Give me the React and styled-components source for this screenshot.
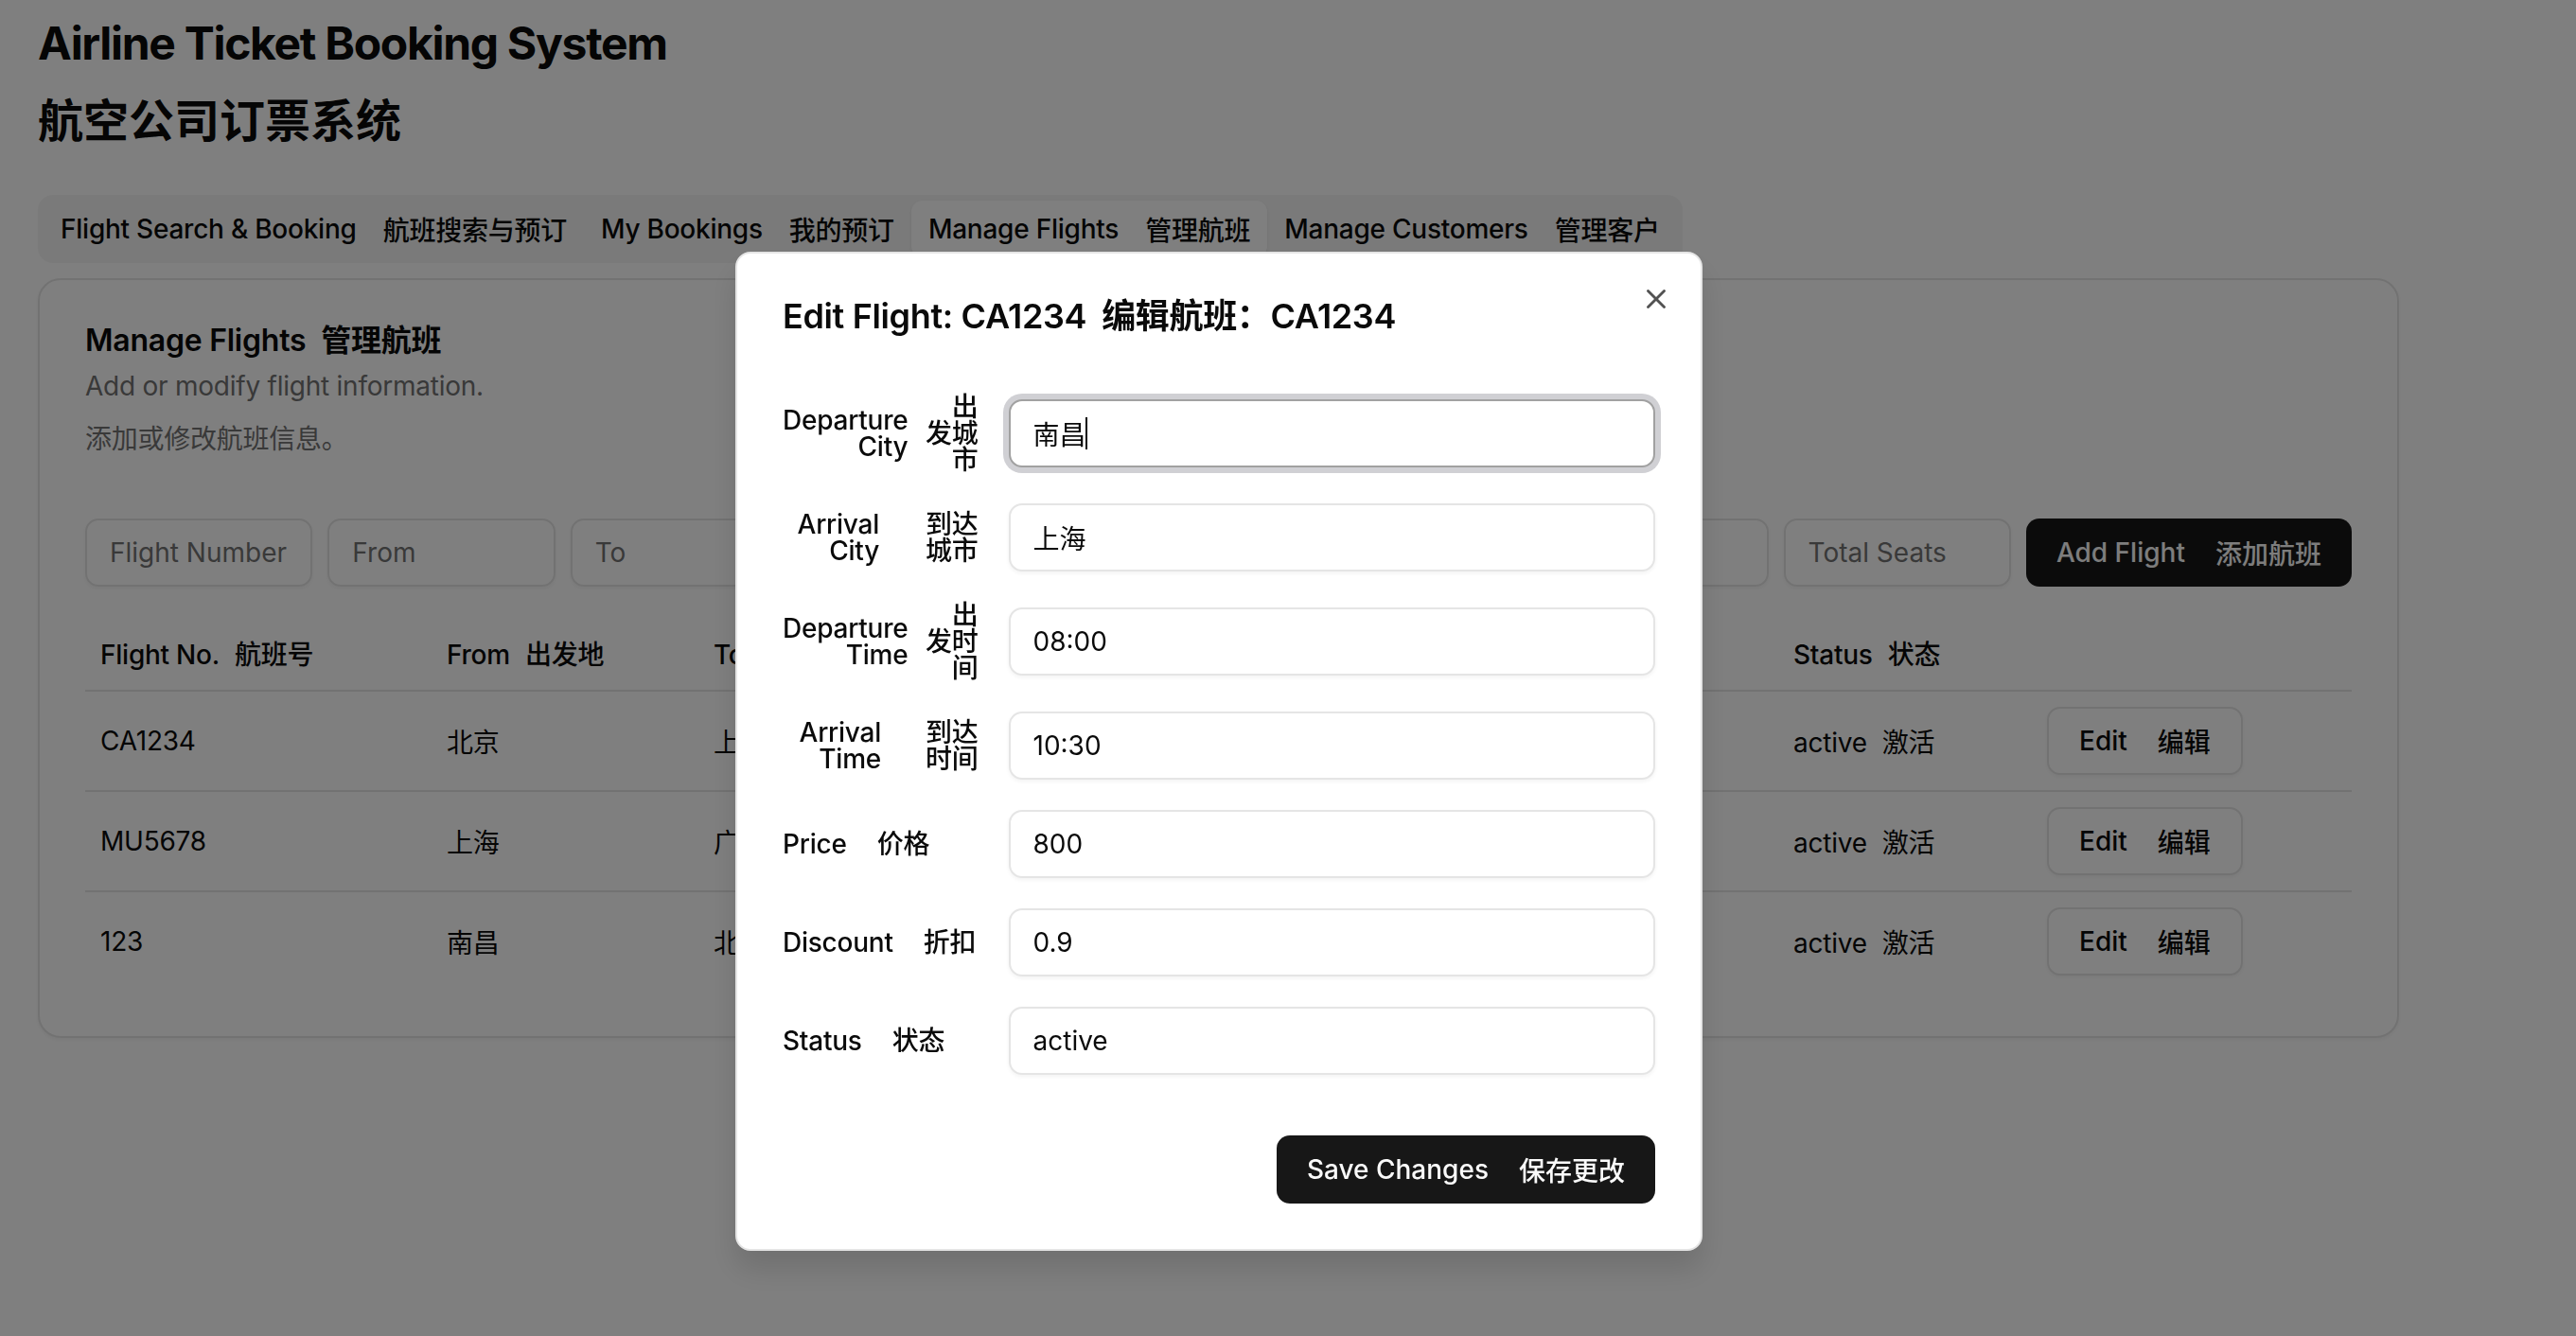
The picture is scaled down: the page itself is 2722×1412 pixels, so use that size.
import styled, { createGlobalStyle } from "styled-components";
import { X } from "lucide-react";

const GlobalStyle = createGlobalStyle`
  html, body {
    margin: 0;
    padding: 0;
    background: #ffffff;
  }
  body {
    font-family: Inter, "Noto Sans CJK SC", sans-serif;
    color: #0a0a0a;
    letter-spacing: -0.015em;
    overflow: hidden;
  }
  * {
    box-sizing: border-box;
  }
`;

const Page = styled.div`
  width: 2575px;
  padding: 14px 40px 0;
  min-height: 1412px;
`;

const Title = styled.h1`
  margin: 0;
  font-size: 48px;
  font-weight: 700;
  display: flex;
  flex-direction: column;
  gap: 18px;
`;

const TitleLine = styled.span`
  line-height: 64px;
  letter-spacing: ${(p) => (p.$tight ? "-1.3px" : "0")};
`;

const TabList = styled.div`
  margin-top: 46px;
  display: inline-flex;
  align-items: center;
  height: 72px;
  padding: 6px;
  background: #f5f5f5;
  border-radius: 16px;
`;

const Tab = styled.div`
  height: 60px;
  display: inline-flex;
  align-items: center;
  gap: 12px;
  padding: 0 16px;
  border: 2px solid transparent;
  border-radius: 12px;
  font-size: 28px;
  font-weight: 500;
  white-space: nowrap;
  background: ${(p) => (p.$active ? "#ffffff" : "transparent")};
  box-shadow: ${(p) => (p.$active ? "0 2px 4px rgba(0,0,0,0.08)" : "none")};
`;

const Zh = styled.span`
  margin-left: 16px;
`;

const Card = styled.div`
  margin-top: 16px;
  border: 2px solid #e5e5e5;
  border-radius: 24px;
  background: #ffffff;
  box-shadow: 0 2px 4px rgba(0, 0, 0, 0.05);
  padding: 48px;
`;

const CardTitle = styled.div`
  font-size: 32px;
  line-height: 32px;
  font-weight: 600;
`;

const CardDesc = styled.div`
  margin-top: ${(p) => p.$mt}px;
  font-size: 28px;
  line-height: 40px;
  color: #737373;
`;

const Toolbar = styled.div`
  margin-top: 64px;
  display: flex;
  gap: 16px;
`;

const Field = styled.input`
  flex: 1 1 0;
  min-width: 0;
  height: 72px;
  padding: 0 24px;
  border: 2px solid #e5e5e5;
  border-radius: 14px;
  background: transparent;
  font: inherit;
  font-size: 28px;
  color: #0a0a0a;
  box-shadow: 0 2px 4px rgba(0, 0, 0, 0.05);
  outline: none;
  &::placeholder {
    color: #737373;
  }
`;

const PrimaryButton = styled.button`
  flex: none;
  height: 72px;
  padding: 0 32px;
  display: inline-flex;
  align-items: center;
  gap: 16px;
  border: none;
  border-radius: 14px;
  background: #171717;
  color: #fafafa;
  font: inherit;
  font-size: 28px;
  font-weight: 500;
  white-space: nowrap;
`;

const Table = styled.table`
  margin-top: 30px;
  width: 100%;
  table-layout: fixed;
  border-collapse: collapse;
  font-size: 28px;
`;

const Col = styled.col`
  width: ${(p) => p.$w}px;
`;

const Th = styled.th`
  height: 80px;
  padding: 0 16px;
  text-align: left;
  font-weight: 500;
  white-space: nowrap;
  border-bottom: 2px solid #e5e5e5;
`;

const Tr = styled.tr`
  border-bottom: 2px solid #e5e5e5;
  &:last-child {
    border-bottom: none;
  }
`;

const Td = styled.td`
  padding: 16px;
  height: 104px;
  white-space: nowrap;
`;

const OutlineButton = styled.button`
  height: 72px;
  padding: 0 32px;
  display: inline-flex;
  align-items: center;
  gap: 16px;
  border: 2px solid #e5e5e5;
  border-radius: 14px;
  background: #ffffff;
  box-shadow: 0 2px 4px rgba(0, 0, 0, 0.05);
  font: inherit;
  font-size: 28px;
  font-weight: 500;
  color: #0a0a0a;
`;

const Overlay = styled.div`
  position: fixed;
  inset: 0;
  background: rgba(0, 0, 0, 0.5);
`;

const Dialog = styled.div`
  position: fixed;
  left: 777px;
  top: 266px;
  width: 1022px;
  display: grid;
  gap: 32px;
  padding: 48px;
  background: #ffffff;
  border: 2px solid #e5e5e5;
  border-radius: 16px;
  box-shadow: 0 20px 30px rgba(0, 0, 0, 0.12);
`;

const CloseButton = styled.button`
  position: absolute;
  top: 31px;
  right: 30px;
  width: 34px;
  height: 34px;
  padding: 0;
  border: none;
  background: none;
  color: #0a0a0a;
  opacity: 0.7;
  display: flex;
`;

const DialogTitle = styled.h2`
  margin: 0;
  font-size: 36px;
  line-height: 36px;
  font-weight: 600;
  letter-spacing: -0.01em;
`;

const Form = styled.div`
  display: grid;
  row-gap: 32px;
  padding: 32px 0;
`;

const Row = styled.div`
  display: grid;
  grid-template-columns: repeat(4, 1fr);
  column-gap: 32px;
  align-items: center;
`;

const FieldLabel = styled.label`
  display: flex;
  align-items: center;
  justify-content: ${(p) => (p.$wrap ? "space-between" : "flex-start")};
  gap: 16px;
  font-size: 28px;
  line-height: 28px;
  font-weight: 500;
  text-align: right;
  white-space: nowrap;
`;

const LabelEn = styled.span`
  min-width: ${(p) => p.$minW || 0}px;
`;

const LabelZh = styled.span`
  margin-left: ${(p) => (p.$wrap ? 0 : 16)}px;
`;

const InputWrap = styled.div`
  grid-column: span 3;
  position: relative;
  display: flex;
`;

const DialogInput = styled.input`
  width: 100%;
  height: 72px;
  padding: 0 24px;
  border: 2px solid ${(p) => (p.$focused ? "#a1a1a1" : "#e5e5e5")};
  border-radius: 14px;
  background: #ffffff;
  font: inherit;
  font-size: 28px;
  color: #0a0a0a;
  caret-color: transparent;
  outline: none;
  box-shadow: ${(p) =>
    p.$focused
      ? "0 0 0 6px rgba(161, 161, 170, 0.5)"
      : "0 2px 4px rgba(0, 0, 0, 0.05)"};
`;

const Caret = styled.span`
  position: absolute;
  left: 81px;
  top: 19px;
  width: 2px;
  height: 34px;
  background: #0a0a0a;
`;

const Footer = styled.div`
  display: flex;
  justify-content: flex-end;
`;

const tabs = [
  ["Flight Search & Booking", "航班搜索与预订"],
  ["My Bookings", "我的预订"],
  ["Manage Flights", "管理航班"],
  ["Manage Customers", "管理客户"],
];

const placeholders = [
  "Flight Number",
  "From",
  "To",
  "Departure Time",
  "Arrival Time",
  "Discount",
  "Price",
  "Total Seats",
];

const flights = [
  { no: "CA1234", from: "北京", to: "上海", dep: "08:00", arr: "10:30", price: "800" },
  { no: "MU5678", from: "上海", to: "广州", dep: "09:00", arr: "11:30", price: "1000" },
  { no: "123", from: "南昌", to: "北京", dep: "12:00", arr: "14:00", price: "900" },
];

const fields = [
  { en: ["Departure", "City"], zh: ["出", "发城", "市"], value: "南昌", focused: true },
  { en: ["Arrival", "City"], zh: ["到达", "城市"], value: "上海", minW: 102 },
  { en: ["Departure", "Time"], zh: ["出", "发时", "间"], value: "08:00" },
  { en: ["Arrival", "Time"], zh: ["到达", "时间"], value: "10:30", minW: 104 },
  { en: ["Price"], zh: ["价格"], value: "800" },
  { en: ["Discount"], zh: ["折扣"], value: "0.9" },
  { en: ["Status"], zh: ["状态"], value: "active" },
];

const Lines = ({ lines }) =>
  lines.map((l, i) => (
    <span key={i}>
      {l}
      {i < lines.length - 1 && <br />}
    </span>
  ));

export default function App() {
  return (
    <>
      <GlobalStyle />
      <Page>
        <Title>
          <TitleLine $tight>Airline Ticket Booking System</TitleLine>
          <TitleLine>航空公司订票系统</TitleLine>
        </Title>

        <TabList>
          {tabs.map(([en, zh]) => (
            <Tab key={en} $active={en === "Manage Flights"}>
              {en}
              <span>
                <Zh>{zh}</Zh>
              </span>
            </Tab>
          ))}
        </TabList>

        <Card>
          <CardTitle>
            Manage Flights<Zh>管理航班</Zh>
          </CardTitle>
          <CardDesc $mt={12}>Add or modify flight information.</CardDesc>
          <CardDesc $mt={16}>添加或修改航班信息。</CardDesc>

          <Toolbar>
            {placeholders.map((p) => (
              <Field key={p} placeholder={p} />
            ))}
            <PrimaryButton>
              Add Flight
              <Zh>添加航班</Zh>
            </PrimaryButton>
          </Toolbar>

          <Table>
            <colgroup>
              {[366, 282, 282, 290, 290, 279, 268, 338].map((w, i) => (
                <Col key={i} $w={w} />
              ))}
            </colgroup>
            <thead>
              <tr>
                <Th>
                  Flight No.<Zh>航班号</Zh>
                </Th>
                <Th>
                  From<Zh>出发地</Zh>
                </Th>
                <Th>
                  To<Zh>目的地</Zh>
                </Th>
                <Th>
                  Departure<Zh>出发</Zh>
                </Th>
                <Th>
                  Arrival<Zh>到达</Zh>
                </Th>
                <Th>
                  Price<Zh>价格</Zh>
                </Th>
                <Th>
                  Status<Zh>状态</Zh>
                </Th>
                <Th />
              </tr>
            </thead>
            <tbody>
              {flights.map((f) => (
                <Tr key={f.no}>
                  <Td>{f.no}</Td>
                  <Td>{f.from}</Td>
                  <Td>{f.to}</Td>
                  <Td>{f.dep}</Td>
                  <Td>{f.arr}</Td>
                  <Td>¥{f.price}</Td>
                  <Td>
                    active<Zh>激活</Zh>
                  </Td>
                  <Td>
                    <OutlineButton>
                      Edit
                      <Zh>编辑</Zh>
                    </OutlineButton>
                  </Td>
                </Tr>
              ))}
            </tbody>
          </Table>
        </Card>
      </Page>

      <Overlay />
      <Dialog>
        <CloseButton aria-label="Close">
          <X size={34} strokeWidth={2} />
        </CloseButton>
        <DialogTitle>
          Edit Flight: CA1234<Zh>编辑航班：CA1234</Zh>
        </DialogTitle>
        <Form>
          {fields.map((f) => {
            const wrap = f.en.length > 1;
            return (
              <Row key={f.en.join(" ")}>
                <FieldLabel $wrap={wrap}>
                  <LabelEn $minW={f.minW}>
                    <Lines lines={f.en} />
                  </LabelEn>
                  <LabelZh $wrap={wrap}>
                    <Lines lines={f.zh} />
                  </LabelZh>
                </FieldLabel>
                <InputWrap>
                  <DialogInput defaultValue={f.value} $focused={f.focused} />
                  {f.focused && <Caret />}
                </InputWrap>
              </Row>
            );
          })}
        </Form>
        <Footer>
          <PrimaryButton>
            Save Changes
            <Zh>保存更改</Zh>
          </PrimaryButton>
        </Footer>
      </Dialog>
    </>
  );
}
